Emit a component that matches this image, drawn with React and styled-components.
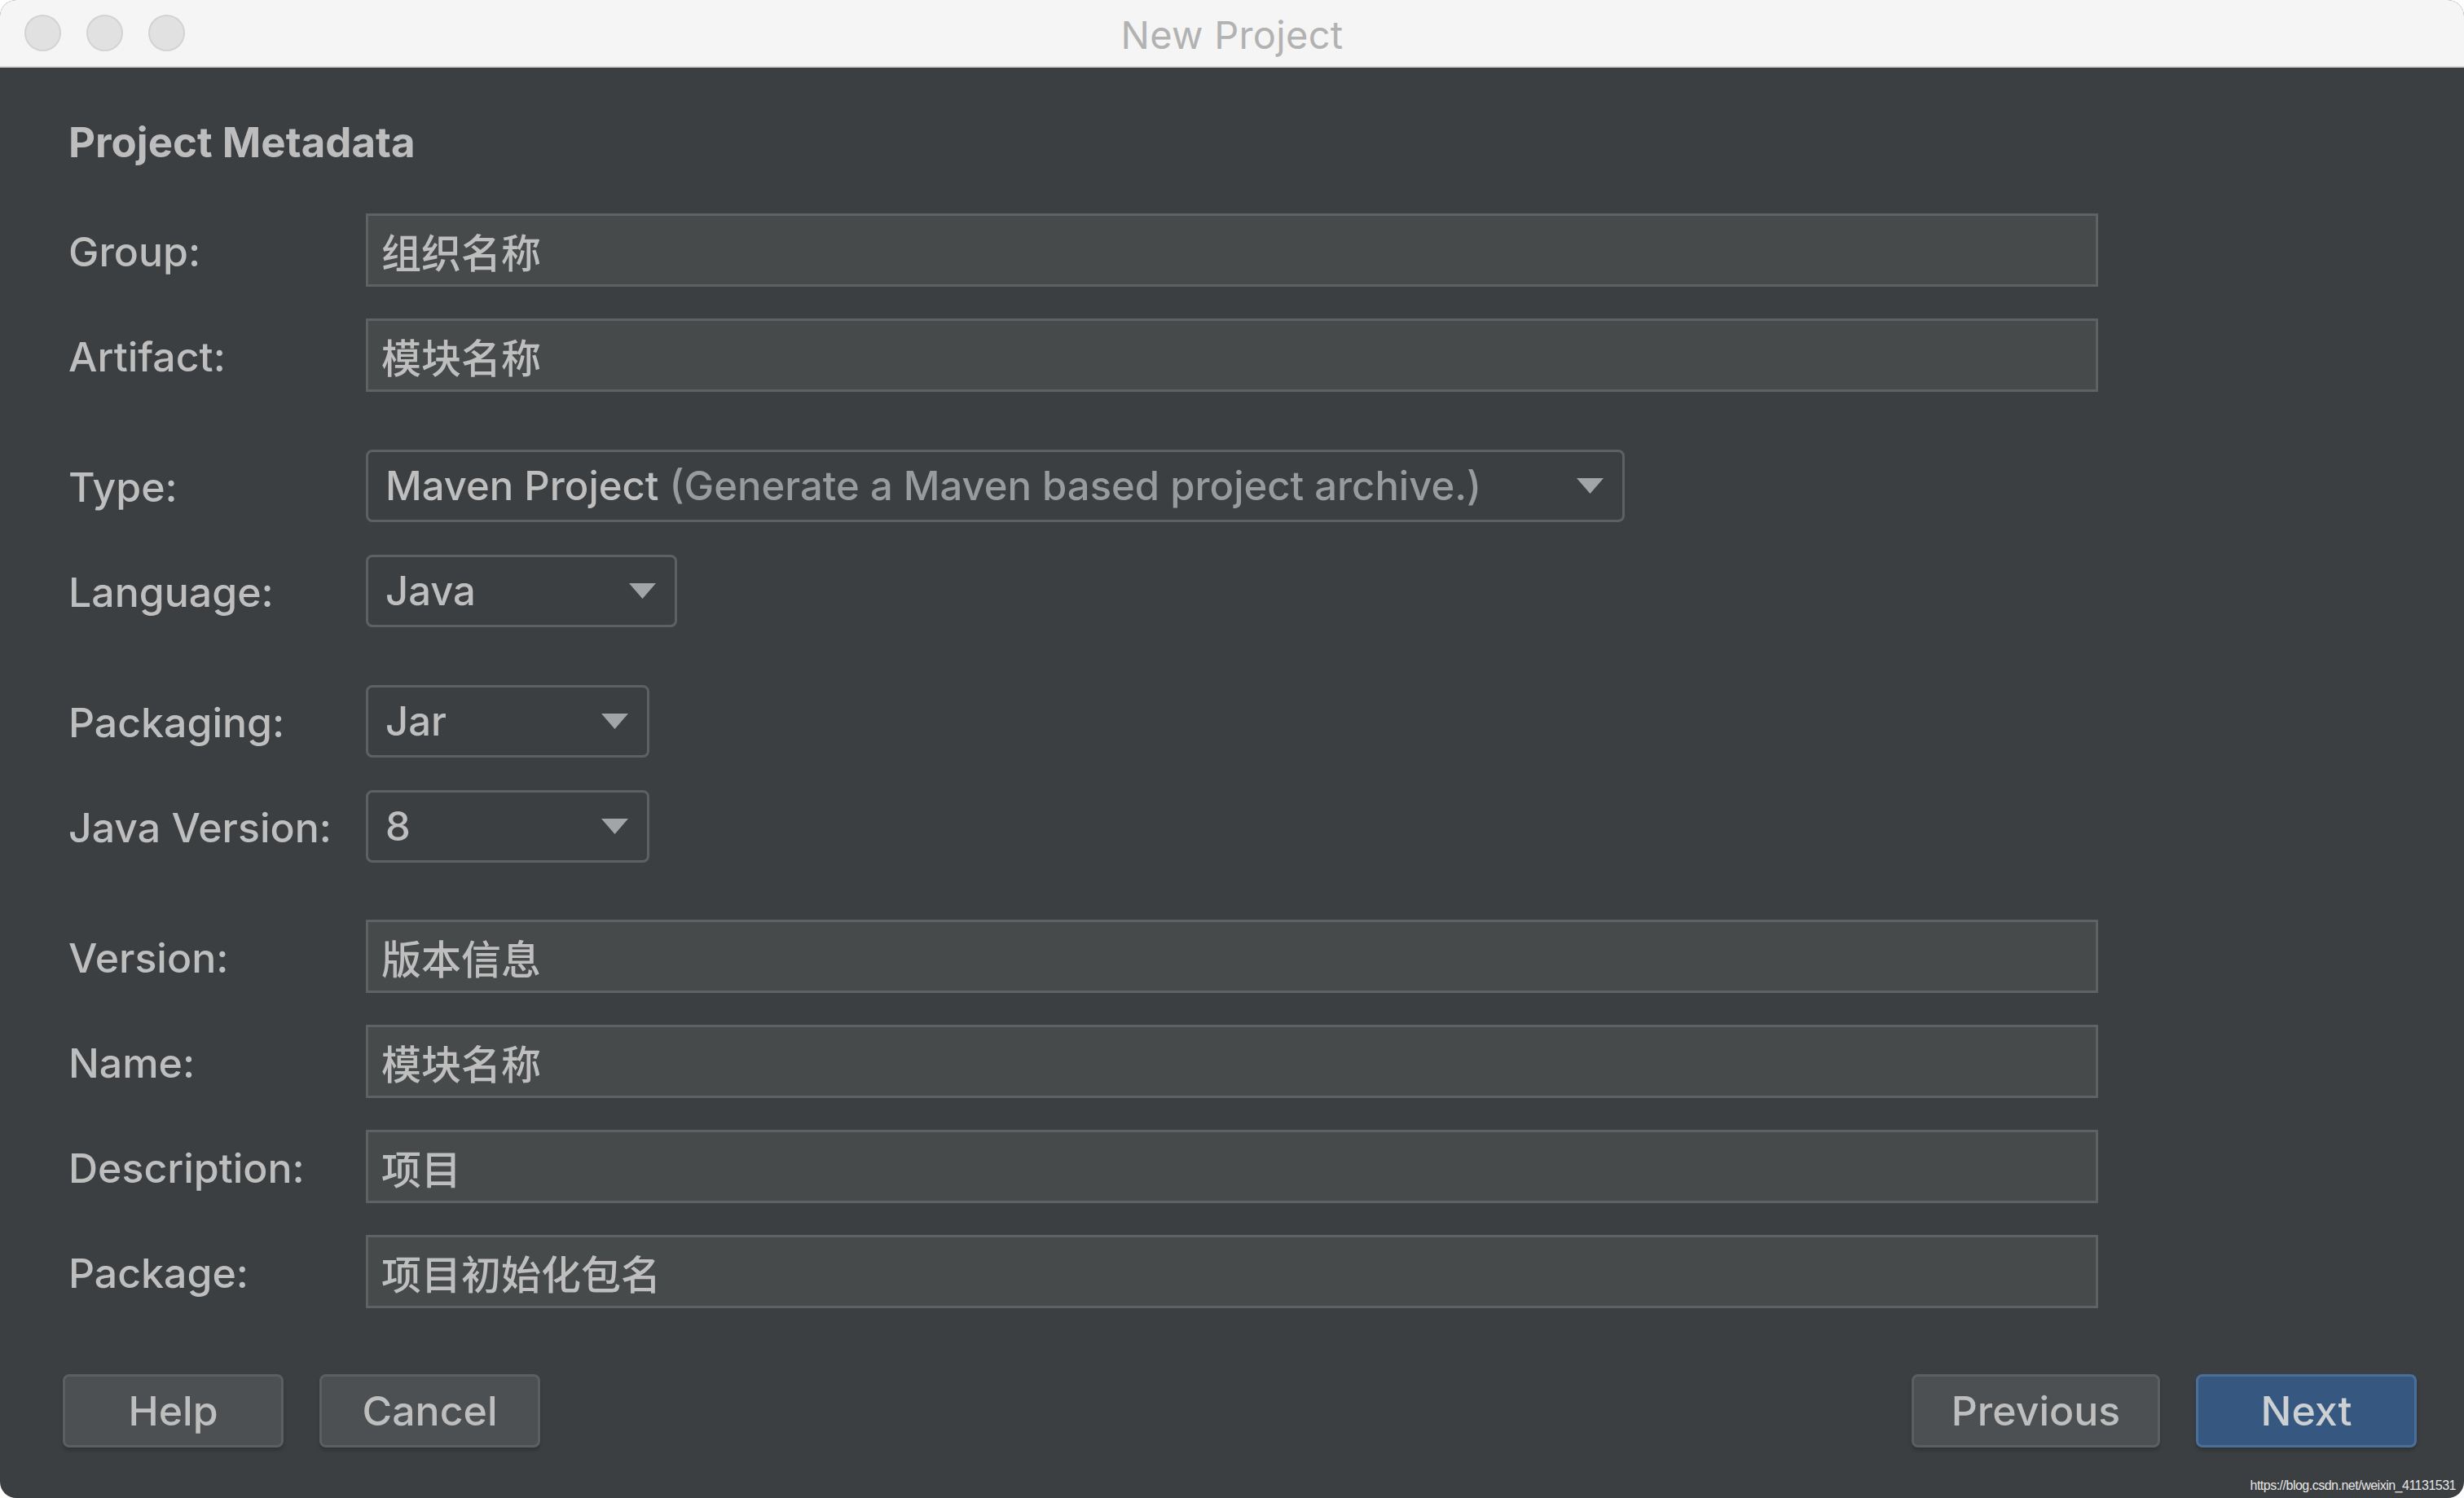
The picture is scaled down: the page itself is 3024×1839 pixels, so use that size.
import React from 'react'
import styled, { createGlobalStyle } from 'styled-components'

const GlobalStyle = createGlobalStyle`
    html, body {
        margin: 0;
        padding: 0;
        background: #ffffff;
    }
    #root {
        height: 100vh;
    }
`

const fields = [
    [
        { label: 'Group:', value: '组织名称' },
        { label: 'Artifact:', value: '模块名称' },
    ],
    [
        { label: 'Type:', select: 'Maven Project', hint: '(Generate a Maven based project archive.)', width: 1545 },
        { label: 'Language:', select: 'Java', width: 382 },
    ],
    [
        { label: 'Packaging:', select: 'Jar', width: 348 },
        { label: 'Java Version:', select: '8', width: 348 },
    ],
    [
        { label: 'Version:', value: '版本信息' },
        { label: 'Name:', value: '模块名称' },
        { label: 'Description:', value: '项目' },
        { label: 'Package:', value: '项目初始化包名' },
    ],
]

function Arrow() {
    return (
        <ArrowIcon viewBox="0 0 33 19">
            <polygon points="0,0 33,0 16.5,19" fill="#a2a5a8" />
        </ArrowIcon>
    )
}

function App() {
    return (
        <>
            <GlobalStyle />
            <Window>
                <TitleBar>
                    <Lights>
                        <Light />
                        <Light />
                        <Light />
                    </Lights>
                    <Title>New Project</Title>
                    <span />
                </TitleBar>
                <Content>
                    <Heading>Project Metadata</Heading>
                    <Form>
                        {fields.map((group, gi) => (
                            <Section key={gi}>
                                {group.map((f) => (
                                    <Row key={f.label}>
                                        <Label>{f.label}</Label>
                                        {f.select ? (
                                            <Select $width={f.width}>
                                                <SelectText>
                                                    {f.select}
                                                    {f.hint && <Hint> {f.hint}</Hint>}
                                                </SelectText>
                                                <Arrow />
                                            </Select>
                                        ) : (
                                            <TextField>{f.value}</TextField>
                                        )}
                                    </Row>
                                ))}
                            </Section>
                        ))}
                    </Form>
                    <Footer>
                        <ButtonGroup>
                            <Button>Help</Button>
                            <Button>Cancel</Button>
                        </ButtonGroup>
                        <ButtonGroup>
                            <Button $width={305}>Previous</Button>
                            <Button $primary>Next</Button>
                        </ButtonGroup>
                    </Footer>
                </Content>
                <Watermark>https://blog.csdn.net/weixin_41131531</Watermark>
            </Window>
        </>
    )
}

const Window = styled.div`
    position: relative;
    box-sizing: border-box;
    height: 100%;
    display: flex;
    flex-direction: column;
    background: #3c3f41;
    border-radius: 20px;
    overflow: hidden;
    font-family: Inter, "Noto Sans CJK SC", sans-serif;
`

const TitleBar = styled.div`
    box-sizing: border-box;
    height: 83px;
    flex-shrink: 0;
    display: grid;
    grid-template-columns: 1fr auto 1fr;
    align-items: center;
    background: #f5f5f5;
    border-bottom: 2px solid #d9d9d9;
`

const Lights = styled.div`
    display: flex;
    gap: 31px;
    padding-left: 30px;
`

const Light = styled.div`
    box-sizing: border-box;
    width: 45px;
    height: 45px;
    border-radius: 50%;
    background: #e1e1e1;
    border: 2px solid #d3d3d3;
`

const Title = styled.div`
    font-size: 47px;
    line-height: 47px;
    padding-top: 4px;
    color: #b2b2b2;
    letter-spacing: 0.3px;
`

const Content = styled.div`
    flex: 1;
    display: flex;
    flex-direction: column;
    padding: 0 58px 0 84px;
`

const Heading = styled.h1`
    margin: 62px 0 0;
    font-size: 51px;
    line-height: 60px;
    font-weight: 700;
    color: #bdbdbd;
`

const Form = styled.div`
    display: flex;
    flex-direction: column;
    gap: 70px;
    margin-top: 57px;
`

const Section = styled.div`
    display: flex;
    flex-direction: column;
    gap: 39px;
`

const Row = styled.div`
    display: flex;
    align-items: center;
    height: 90px;
`

const Label = styled.div`
    width: 365px;
    flex-shrink: 0;
    font-size: 50px;
    font-weight: 500;
    color: #bebebe;
    padding-top: 3px;
`

const TextField = styled.div`
    box-sizing: border-box;
    width: 2126px;
    height: 90px;
    display: flex;
    align-items: center;
    padding-left: 16px;
    background: #464a4b;
    border: 3px solid #5f6162;
    font-family: "Noto Sans CJK SC", Inter, sans-serif;
    font-size: 49px;
    font-weight: 500;
    color: #bebebe;
`

const Select = styled.div`
    box-sizing: border-box;
    width: ${(p) => p.$width}px;
    height: 89px;
    display: flex;
    align-items: center;
    justify-content: space-between;
    padding: 0 23px 0 21px;
    background: #3c3f41;
    border: 3px solid #5e6163;
    border-radius: 8px;
`

const SelectText = styled.div`
    font-size: 49px;
    font-weight: 500;
    color: #bebebe;
    white-space: pre;
`

const Hint = styled.span`
    color: #999a9b;
`

const ArrowIcon = styled.svg`
    width: 33px;
    height: 19px;
    flex-shrink: 0;
`

const Footer = styled.div`
    display: flex;
    justify-content: space-between;
    margin-top: 81px;
    margin-left: -7px;
`

const ButtonGroup = styled.div`
    display: flex;
    gap: 44px;
`

const Button = styled.button`
    box-sizing: border-box;
    width: ${(p) => p.$width || 271}px;
    height: 90px;
    border-radius: 8px;
    border: 3px solid ${(p) => (p.$primary ? '#4a6f98' : '#5c5f61')};
    background: ${(p) => (p.$primary ? '#365880' : '#4c5052')};
    box-shadow: 0 4px 4px rgba(0, 0, 0, 0.18);
    font-family: Inter, sans-serif;
    font-size: 50px;
    font-weight: 500;
    color: ${(p) => (p.$primary ? '#cdd0d3' : '#bebebe')};
    padding: 0;
`

const Watermark = styled.div`
    position: absolute;
    right: 10px;
    bottom: 6px;
    font-family: "Liberation Sans", sans-serif;
    font-size: 16px;
    letter-spacing: -0.5px;
    color: #e6e6e6;
`

export default App
